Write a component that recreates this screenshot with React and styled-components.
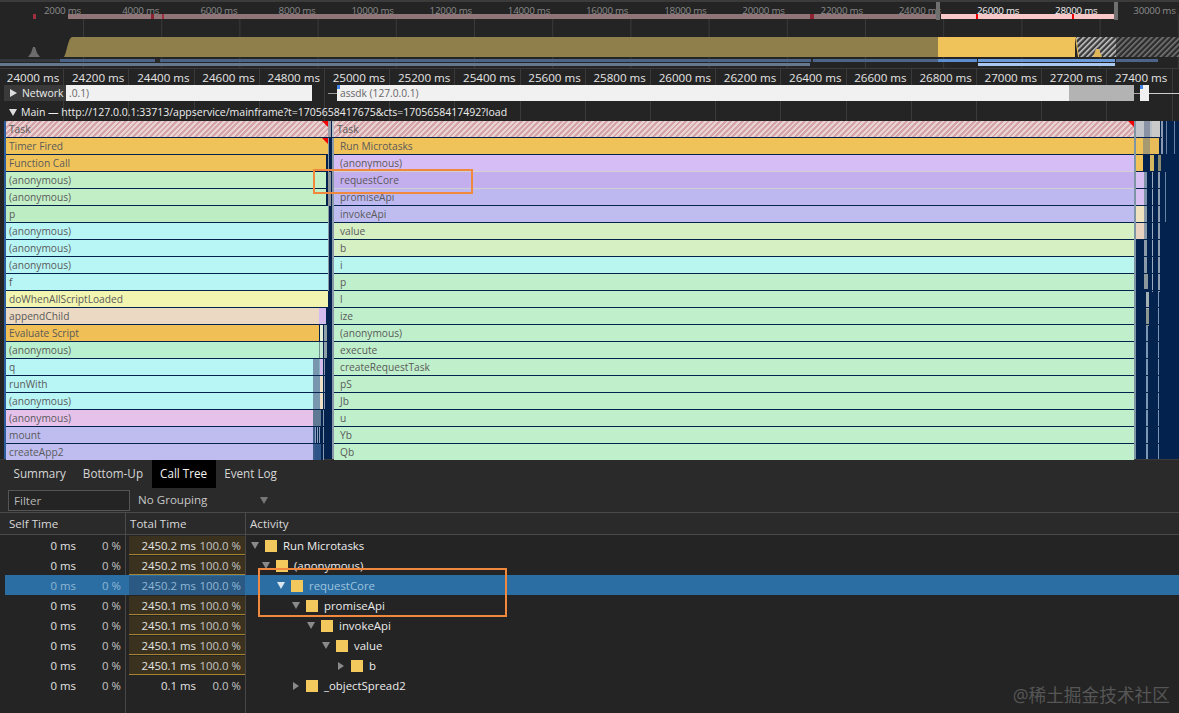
import React from 'react';
import styled, { createGlobalStyle } from 'styled-components';

const GlobalStyle = createGlobalStyle`
  html, body { margin: 0; padding: 0; background: #242424; }
  body { font-family: 'Open Sans', 'Noto Sans', sans-serif; }
`;

const Page = styled.div`
  position: relative;
  width: 1179px;
  height: 713px;
  overflow: hidden;
  background: #242424;
  color: #ddd;
`;

/* overview */
const Overview = styled.div`
  height: 68px;
  border-top: 2px solid #3b3b3b;
  box-sizing: border-box;
  position: relative;
`;

const OverviewTicks = styled.div`
  display: flex;
  height: 12px;
  padding-left: 4.8px;
  white-space: nowrap;
`;

const OverviewTick = styled.div`
  flex: 0 0 78.2px;
  box-sizing: border-box;
  padding-right: 2px;
  text-align: right;
  font-size: 9.8px;
  letter-spacing: -0.25px;
  line-height: 17px;
  color: ${props => props.$active ? '#f2f2f2' : '#8b8b8b'};
`;

const OverviewChart = styled.svg`
  display: block;
`;

const Handle = styled.div`
  position: absolute;
  top: 0;
  left: ${props => props.$left}px;
  width: 4px;
  height: 18px;
  background: #6f6f6f;
`;

/* ruler, network and main track */
const Tracks = styled.div`
  height: 53px;
  background-image: repeating-linear-gradient(90deg, transparent 0 64.2px, #3a3a3a 64.2px 65.2px);
  background-position: -1px 0;
  border-top: 1px solid #3b3b3b;
  box-sizing: border-box;
`;

const Ruler = styled.div`
  display: flex;
  height: 16px;
  margin-left: -1px;
  white-space: nowrap;
`;

const RulerTick = styled.div`
  flex: 0 0 65.2px;
  box-sizing: border-box;
  padding-right: 5px;
  text-align: right;
  font-size: 11.6px;
  line-height: 17px;
  color: #e4e4e4;
`;

const NetworkRow = styled.div`
  display: flex;
  align-items: center;
  height: 16px;
  padding-left: 4px;
`;

const NetworkLabel = styled.div`
  display: flex;
  align-items: center;
  gap: 5px;
  width: 62px;
  height: 16px;
  box-sizing: border-box;
  padding-left: 6px;
  background: #3a3a3a;
  font-size: 10.4px;
  color: #eee;
`;

const NetworkBar = styled.div`
  position: relative;
  width: ${props => props.$width}px;
  height: 16px;
  box-sizing: border-box;
  padding-left: 3px;
  background: #f1f1f1;
  color: #666;
  font-size: 10.2px;
  line-height: 16px;
  white-space: nowrap;
`;

const NetworkGrey = styled.div`
  width: ${props => props.$width}px;
  height: 16px;
  background: #b3b3b3;
`;

const Whisker = styled.div`
  width: ${props => props.$width}px;
  height: 1px;
  background: ${props => props.$color};
`;

const BlueCorner = styled.div`
  position: absolute;
  top: 0;
  left: 0;
  width: 3px;
  height: 4px;
  background: #3f86e8;
`;

const MainHeader = styled.div`
  display: flex;
  align-items: center;
  gap: 4px;
  height: 20px;
  box-sizing: border-box;
  padding: 2px 0 0 9px;
  font-size: 10.5px;
  color: #eee;
  white-space: nowrap;
`;

/* flame chart */
const Flame = styled.div`
  display: flex;
  height: 338px;
  margin-left: 4px;
  border-left: 2px solid #2a5c9e;
  background: #04224e;
`;

const FlameColumn = styled.div`
  display: flex;
  flex-direction: column;
  gap: 1px;
  width: ${props => props.$width}px;
  flex: none;
`;

const FlameRow = styled.div`
  display: flex;
  height: 16px;
  flex: none;
`;

const FlameSlice = styled.div`
  position: relative;
  flex: ${props => props.$width ? `0 0 ${props.$width}px` : '1 1 0'};
  min-width: 0;
  box-sizing: border-box;
  padding-left: ${props => props.$pad ?? 3}px;
  color: #5a5a5a;
  font-size: 10.2px;
  line-height: 16px;
  white-space: nowrap;
  background: ${props => props.$hatch
    ? 'repeating-linear-gradient(135deg, #d5a4a8 0 2px, #e9d3d3 2px 4px)'
    : props.$color};
  box-shadow: ${props => props.$focus ? '0 -1px #d0d0d0, 0 1px #d0d0d0' : 'none'};
`;

const LongTask = styled.div`
  position: absolute;
  top: 0;
  right: 0;
  width: 0;
  height: 0;
  border-top: 6px solid #f00000;
  border-left: 6px solid transparent;
`;

const FlameDrawing = styled.svg`
  display: block;
  flex: none;
`;

/* details panel */
const Tabs = styled.div`
  display: flex;
  height: 29px;
  padding-left: 5px;
  background: #2a2a2a;
  border-top: 1px solid #3a3a3a;
  box-sizing: border-box;
`;

const Tab = styled.div`
  padding: 0 8.5px;
  font-size: 11.7px;
  line-height: 27px;
  background: ${props => props.$active ? '#000' : 'transparent'};
  color: ${props => props.$active ? '#f2f2f2' : '#d6d6d6'};
`;

const FilterBar = styled.div`
  display: flex;
  align-items: center;
  height: 25px;
  box-sizing: border-box;
  padding-left: 8px;
  background: #2a2a2a;
  border-bottom: 1px solid #4a4a4a;
`;

const FilterInput = styled.div`
  width: 122px;
  height: 21px;
  box-sizing: border-box;
  padding-left: 5px;
  border: 1px solid #555;
  background: #242424;
  color: #b8b8b8;
  font-size: 11.6px;
  line-height: 19px;
`;

const Grouping = styled.div`
  width: 122px;
  padding: 0 0 2px 8px;
  font-size: 11.6px;
  color: #c8c8c8;
`;

const SmallTriangle = styled.div`
  width: 0;
  height: 0;
  flex: none;
  border-style: solid;
  border-color: transparent;
  ${props => props.$open
    ? `border-width: ${props.$size ?? 6}px ${(props.$size ?? 6) * 0.67}px 0; border-top-color: ${props.$color ?? '#8a8a8a'};`
    : `border-width: ${(props.$size ?? 6) * 0.67}px 0 ${(props.$size ?? 6) * 0.67}px ${props.$size ?? 6}px; border-left-color: ${props.$color ?? '#8a8a8a'};`}
`;

const TableHead = styled.div`
  display: grid;
  grid-template-columns: 126px 120px 1fr;
  height: 22px;
  background: #2a2a2a;
  border-bottom: 1px solid #4a4a4a;
  box-sizing: border-box;
  font-size: 11.6px;
  line-height: 21px;
  color: #d8d8d8;
`;

const HeadCell = styled.div`
  padding-left: ${props => props.$pad}px;
  border-right: ${props => props.$last ? 'none' : '1px solid #4a4a4a'};
`;

const TableBody = styled.div`
  position: relative;
  height: 178px;
`;

const ColumnLine = styled.div`
  position: absolute;
  top: 0;
  bottom: 0;
  left: ${props => props.$left}px;
  width: 1px;
  background: #474747;
`;

const Row = styled.div`
  position: relative;
  display: grid;
  grid-template-columns: 120px 120px 1fr;
  height: 20px;
  margin-left: 5px;
  font-size: 11.4px;
  line-height: 21px;
  color: ${props => props.$selected ? '#8fb6d4' : '#e2e2e2'};
  background: ${props => props.$selected ? '#2a6ea3' : 'transparent'};
`;

const SelfCell = styled.div`
  display: grid;
  grid-template-columns: 71px 45px;
  text-align: right;
`;

const Percent = styled.span`
  color: ${props => props.$selected ? '#8fb6d4' : '#c4c4c4'};
`;

const TotalCell = styled.div`
  display: grid;
  grid-template-columns: 67px 45px;
  box-sizing: border-box;
  margin: 1px 0 0 4px;
  width: 116px;
  height: 19px;
  line-height: 19px;
  text-align: right;
  background: ${props => props.$bar
    ? (props.$selected ? '#2a5a84' : '#3a321f')
    : 'transparent'};
  border-bottom: 1px solid ${props => props.$bar
    ? (props.$selected ? '#2a5a84' : '#a6842f')
    : 'transparent'};
`;

const Activity = styled.div`
  display: flex;
  align-items: center;
  padding-left: ${props => props.$depth * 15 + (props.$depth > 0 ? 1 : 5)}px;
  color: ${props => props.$selected ? '#9fc4de' : '#ececec'};
`;

const TreeArrow = styled.div`
  display: flex;
  justify-content: center;
  width: 10px;
  margin-right: 5px;
`;

const Swatch = styled.div`
  width: 12px;
  height: 12px;
  margin-right: 6px;
  background: #f3c95e;
`;

const Callout = styled.div`
  position: absolute;
  left: ${props => props.$left}px;
  top: ${props => props.$top}px;
  width: ${props => props.$width}px;
  height: ${props => props.$height}px;
  box-sizing: border-box;
  border: 2px solid #f0883e;
`;

const Watermark = styled.div`
  position: absolute;
  right: 9px;
  bottom: 6px;
  font-family: 'Open Sans', 'Noto Sans CJK SC', sans-serif;
  font-size: 17.7px;
  line-height: 24px;
  color: #565656;
`;

const overviewTicks = [2000, 4000, 6000, 8000, 10000, 12000, 14000, 16000, 18000, 20000, 22000, 24000, 26000, 28000, 30000];
const rulerTicks = Array.from({ length: 18 }, (_, i) => 24000 + i * 200);

const YELLOW = '#f0c35a';
const GREEN = '#c0f0cb';
const CYAN = '#b8f5f5';
const PURPLE = '#bfbdf0';
const NAVY = '#04224e';
const SLATE = '#7896ad';

const leftRows = [
  { name: 'Task', hatch: true, long: true },
  { name: 'Timer Fired', color: YELLOW, long: true },
  { name: 'Function Call', color: YELLOW, end: 320 },
  { name: '(anonymous)', color: '#c3efc7', end: 320 },
  { name: '(anonymous)', color: '#c3efc7', end: 320 },
  { name: 'p', color: '#bdedc3' },
  { name: '(anonymous)', color: CYAN },
  { name: '(anonymous)', color: CYAN },
  { name: '(anonymous)', color: CYAN },
  { name: 'f', color: CYAN },
  { name: 'doWhenAllScriptLoaded', color: '#f2f5b0' },
  { name: 'appendChild', color: '#ecd9c3', end: 313, rest: [[7, '#d5bcef']] },
  { name: 'Evaluate Script', color: '#f0bf55', end: 313, rest: [[1, NAVY], [3, '#e4efd8'], [1, NAVY], [3, '#8fa0a8']] },
  { name: '(anonymous)', color: '#b9f0cf', end: 313, rest: [[1, '#6f8f90'], [3, '#c4e8d4'], [1, NAVY], [3, '#8fa0a8']] },
  { name: 'q', color: CYAN, end: 307, rest: [[6, SLATE], [1, '#8ab0c4'], [3, '#d5bcef'], [1, NAVY], [1, '#8a9ab0']] },
  { name: 'runWith', color: CYAN, end: 307, rest: [[7, SLATE], [3, '#efe0c8'], [1, NAVY], [1, '#8a9ab0']] },
  { name: '(anonymous)', color: CYAN, end: 307, rest: [[7, SLATE], [3, '#efe0c8'], [1, NAVY], [1, '#8a9ab0']] },
  { name: '(anonymous)', color: '#e6c1ea', end: 307, rest: [[8, '#5f7a92'], [2, NAVY], [1, '#8a9ab0']] },
  { name: 'mount', color: PURPLE, end: 307, rest: [[2, '#3a5a88'], [1, '#8ea4c0'], [1, NAVY], [1, '#8ea4c0'], [1, NAVY], [1, '#8ea4c0'], [3, NAVY], [1, '#8a9ab0']] },
  { name: 'createApp2', color: PURPLE, end: 307, rest: [[2, '#3a5a88'], [6, '#2f5488'], [2, NAVY], [1, '#8a9ab0']] },
];

const rightRows = [
  { name: 'Task', hatch: true, long: true },
  { name: 'Run Microtasks', color: YELLOW, pad: 6 },
  { name: '(anonymous)', color: '#d7bdf5', pad: 6 },
  { name: 'requestCore', color: '#c3aeee', pad: 6, focus: true },
  { name: 'promiseApi', color: '#bdb8f0', pad: 6 },
  { name: 'invokeApi', color: PURPLE, pad: 6 },
  { name: 'value', color: '#d6f0c4', pad: 6 },
  { name: 'b', color: '#d6f0c4', pad: 6 },
  { name: 'i', color: '#b9f6ef', pad: 6 },
  { name: 'p', color: GREEN, pad: 6 },
  { name: 'l', color: GREEN, pad: 6 },
  { name: 'ize', color: GREEN, pad: 6 },
  { name: '(anonymous)', color: GREEN, pad: 6 },
  { name: 'execute', color: GREEN, pad: 6 },
  { name: 'createRequestTask', color: GREEN, pad: 6 },
  { name: 'pS', color: GREEN, pad: 6 },
  { name: 'Jb', color: GREEN, pad: 6 },
  { name: 'u', color: GREEN, pad: 6 },
  { name: 'Yb', color: GREEN, pad: 6 },
  { name: 'Qb', color: GREEN, pad: 6 },
];

const treeRows = [
  { self: '0 ms', selfPct: '0 %', total: '2450.2 ms', totalPct: '100.0 %', name: 'Run Microtasks', depth: 0, open: true, bar: true },
  { self: '0 ms', selfPct: '0 %', total: '2450.2 ms', totalPct: '100.0 %', name: '(anonymous)', depth: 1, open: true, bar: true },
  { self: '0 ms', selfPct: '0 %', total: '2450.2 ms', totalPct: '100.0 %', name: 'requestCore', depth: 2, open: true, bar: true, selected: true },
  { self: '0 ms', selfPct: '0 %', total: '2450.1 ms', totalPct: '100.0 %', name: 'promiseApi', depth: 3, open: true, bar: true },
  { self: '0 ms', selfPct: '0 %', total: '2450.1 ms', totalPct: '100.0 %', name: 'invokeApi', depth: 4, open: true, bar: true },
  { self: '0 ms', selfPct: '0 %', total: '2450.1 ms', totalPct: '100.0 %', name: 'value', depth: 5, open: true, bar: true },
  { self: '0 ms', selfPct: '0 %', total: '2450.1 ms', totalPct: '100.0 %', name: 'b', depth: 6, open: false, bar: true },
  { self: '0 ms', selfPct: '0 %', total: '0.1 ms', totalPct: '0.0 %', name: '_objectSpread2', depth: 3, open: false, bar: false },
];

function OverviewGraph() {
  const lines = Array.from({ length: 15 }, (_, i) => 83 + i * 78.2);

  return (
    <OverviewChart width="1179" height="54" viewBox="0 14 1179 54">
      <defs>
        <pattern id="hatchBright" width="4" height="4" patternUnits="userSpaceOnUse" patternTransform="rotate(45)">
          <rect width="4" height="4" fill="#3a3a3a" />
          <rect width="1.6" height="4" fill="#c8c8c8" />
        </pattern>
        <pattern id="hatchDim" width="4" height="4" patternUnits="userSpaceOnUse" patternTransform="rotate(45)">
          <rect width="4" height="4" fill="#2c2c2c" />
          <rect width="1.6" height="4" fill="#777" />
        </pattern>
      </defs>
      {lines.map(x => <rect key={x} x={x} y="14" width="1" height="54" fill="#3a3a3a" />)}

      <rect x="68" y="14" width="870" height="5" fill="#8f7478" />
      <rect x="33" y="14" width="3" height="5" fill="#a03040" />
      <rect x="151" y="14" width="3" height="5" fill="#8d2230" />
      <rect x="162" y="14" width="2" height="5" fill="#a03040" />
      <rect x="810" y="14" width="4" height="5" fill="#8d2230" />
      <rect x="941" y="14" width="174" height="5" fill="#f8c8c8" />
      <rect x="976" y="14" width="2" height="5" fill="#f00000" />
      <rect x="1072" y="14" width="2" height="5" fill="#f00000" />

      <path d="M64 57 C67 52 68 38 72 37 L938 37 L938 57 Z" fill="#8f7f4b" />
      <path d="M28 57 L31 53 L33 47 L35 47 L37 53 L40 57 Z" fill="#6c6c6c" />
      <rect x="938" y="37" width="137" height="20" fill="#f0c35a" />
      <path d="M1075 37 L1077 37 L1080 57 L1078 57 Z" fill="#f0c35a" />
      <path d="M1076 37 L1116 37 L1116 57 L1079 57 Z" fill="url(#hatchBright)" />
      <rect x="1116" y="37" width="63" height="20" fill="url(#hatchDim)" />
      <path d="M1093 57 L1096 49 L1099 49 L1102 57 Z" fill="#e0b65a" />

      <rect x="0" y="59" width="60" height="3" fill="#33383f" />
      <rect x="60" y="59" width="878" height="3" fill="#4b6488" />
      <rect x="155" y="59" width="5" height="3" fill="#2a2a2a" />
      <rect x="811" y="59" width="2" height="3" fill="#2a2a2a" />
      <rect x="938" y="59" width="39" height="3" fill="#5b8fd0" />
      <rect x="978" y="59" width="137" height="3" fill="#6a9ad8" />
      <rect x="1116" y="59" width="42" height="3" fill="#4b6488" />
      <rect x="0" y="63" width="810" height="3" fill="#66788f" />
      <rect x="978" y="63" width="137" height="3" fill="#a8c8f0" />
    </OverviewChart>
  );
}

function FlameGap() {
  return (
    <FlameDrawing width="6" height="338" viewBox="0 0 6 338">
      <rect width="6" height="338" fill="#04224e" />
      <rect x="0" y="0" width="3" height="16" fill="#9a9ca8" />
      <rect x="4" y="0" width="2" height="16" fill="#c0c0c8" />
      <rect x="0" y="17" width="1" height="153" fill="#8a9aa8" />
      <rect x="4" y="17" width="2" height="321" fill="#8a9aa8" />
      <rect x="0" y="51" width="3" height="34" fill="#8a9298" />
    </FlameDrawing>
  );
}

function FlameTail() {
  const rows = Array.from({ length: 20 }, (_, i) => i * 17 - 1);

  return (
    <FlameDrawing width="45" height="338" viewBox="1134 121 45 338">
      <rect x="1134" y="121" width="45" height="338" fill="#04224e" />
      <rect x="1134" y="121" width="2" height="338" fill="#7e95a5" />

      <rect x="1136" y="121" width="8" height="16" fill="#c2c6ca" />
      <rect x="1144" y="121" width="6" height="16" fill="#8a93a6" />
      <rect x="1150" y="121" width="2" height="16" fill="#b8bec6" />
      <rect x="1152" y="121" width="8" height="16" fill="#c9c9c9" />
      <rect x="1161" y="121" width="2" height="33" fill="#8a9ab0" />
      <rect x="1166" y="121" width="1" height="33" fill="#6a84a8" />
      <rect x="1174" y="121" width="1" height="33" fill="#6a84a8" />

      <rect x="1136" y="138" width="7" height="33" fill="#f0c35a" />
      <rect x="1143" y="138" width="7" height="16" fill="#a89a70" />
      <rect x="1150" y="138" width="9" height="16" fill="#e8bc58" />
      <rect x="1150" y="155" width="4" height="16" fill="#d4b560" />
      <rect x="1154" y="155" width="4" height="16" fill="#04224e" />
      <rect x="1158" y="155" width="3" height="16" fill="#8a8a70" />

      <rect x="1136" y="172" width="8" height="34" fill="#d9c0f2" />
      <rect x="1144" y="172" width="3" height="34" fill="#7f94a8" />
      <rect x="1136" y="206" width="8" height="16" fill="#efe3bf" />
      <rect x="1136" y="223" width="8" height="16" fill="#ead2c0" />
      <rect x="1144" y="206" width="3" height="67" fill="#8b9aa8" />
      <rect x="1144" y="273" width="4" height="16" fill="#8c979c" />

      <rect x="1152" y="172" width="1" height="120" fill="#9cacc0" />
      <rect x="1158" y="172" width="2" height="120" fill="#8d9cb0" />
      <rect x="1165" y="172" width="1" height="50" fill="#6a84a8" />

      <rect x="1146" y="292" width="3" height="17" fill="#a4b0b4" />
      <rect x="1146" y="309" width="3" height="17" fill="#8d9890" />
      <rect x="1146" y="326" width="2" height="133" fill="#7c97b4" />
      <rect x="1158" y="292" width="1" height="167" fill="#7c97b4" />
      {rows.slice(1).map(y => <rect key={y} x="1136" y={121 + y} width="26" height="1" fill="#04224e" />)}
    </FlameDrawing>
  );
}

function renderSlice(row, index) {
  return (
    <FlameRow key={index}>
      <FlameSlice $color={row.color} $hatch={row.hatch} $pad={row.pad} $width={row.end} $focus={row.focus}>
        {row.name}
        {row.long && <LongTask />}
      </FlameSlice>
      {row.rest && row.rest.map(([width, color], i) => (
        <FlameSlice key={i} $width={width} $color={color} $pad={0} />
      ))}
    </FlameRow>
  );
}

function App() {
  return (
    <Page>
      <GlobalStyle />

      <Overview>
        <OverviewTicks>
          {overviewTicks.map(tick => (
            <OverviewTick key={tick} $active={tick === 26000 || tick === 28000}>{tick} ms</OverviewTick>
          ))}
        </OverviewTicks>
        <OverviewGraph />
        <Handle $left={936} />
        <Handle $left={1114} />
      </Overview>

      <Tracks>
        <Ruler>
          {rulerTicks.map(tick => <RulerTick key={tick}>{tick} ms</RulerTick>)}
        </Ruler>
        <NetworkRow>
          <NetworkLabel>
            <SmallTriangle $size={7} $color="#ddd" />
            Network
          </NetworkLabel>
          <NetworkBar $width={246}>.0.1)</NetworkBar>
          <Whisker $width={16} $color="transparent" />
          <Whisker $width={9} $color="#999" />
          <NetworkBar $width={732}>
            <BlueCorner />
            assdk (127.0.0.1)
          </NetworkBar>
          <NetworkGrey $width={65} />
          <Whisker $width={6} $color="#aaa" />
          <NetworkBar $width={9}><BlueCorner /></NetworkBar>
          <Whisker $width={30} $color="#ccc" />
        </NetworkRow>
        <MainHeader>
          <SmallTriangle $open $size={7} $color="#ddd" />
          Main — http://127.0.0.1:33713/appservice/mainframe?t=1705658417675&amp;cts=1705658417492?load
        </MainHeader>
      </Tracks>

      <Flame>
        <FlameColumn $width={322}>{leftRows.map(renderSlice)}</FlameColumn>
        <FlameGap />
        <FlameColumn $width={800}>{rightRows.map(renderSlice)}</FlameColumn>
        <FlameTail />
      </Flame>

      <Tabs>
        <Tab>Summary</Tab>
        <Tab>Bottom-Up</Tab>
        <Tab $active>Call Tree</Tab>
        <Tab>Event Log</Tab>
      </Tabs>

      <FilterBar>
        <FilterInput>Filter</FilterInput>
        <Grouping>No Grouping</Grouping>
        <SmallTriangle $open $size={7} $color="#777" />
      </FilterBar>

      <TableHead>
        <HeadCell $pad={9}>Self Time</HeadCell>
        <HeadCell $pad={4}>Total Time</HeadCell>
        <HeadCell $pad={4} $last>Activity</HeadCell>
      </TableHead>

      <TableBody>
        <ColumnLine $left={125} />
        <ColumnLine $left={245} />
        {treeRows.map((row, index) => (
          <Row key={index} $selected={row.selected}>
            <SelfCell>
              <span>{row.self}</span>
              <Percent $selected={row.selected}>{row.selfPct}</Percent>
            </SelfCell>
            <TotalCell $bar={row.bar} $selected={row.selected}>
              <span>{row.total}</span>
              <Percent $selected={row.selected}>{row.totalPct}</Percent>
            </TotalCell>
            <Activity $depth={row.depth} $selected={row.selected}>
              <TreeArrow>
                <SmallTriangle $open={row.open} $size={row.open ? 7 : 6} $color={row.selected ? '#d8e6f0' : '#8a8a8a'} />
              </TreeArrow>
              <Swatch />
              {row.name}
            </Activity>
          </Row>
        ))}
      </TableBody>

      <Callout $left={313} $top={169} $width={160} $height={25} />
      <Callout $left={258} $top={568} $width={249} $height={49} />
      <Watermark>@稀土掘金技术社区</Watermark>
    </Page>
  );
}

export default App;
